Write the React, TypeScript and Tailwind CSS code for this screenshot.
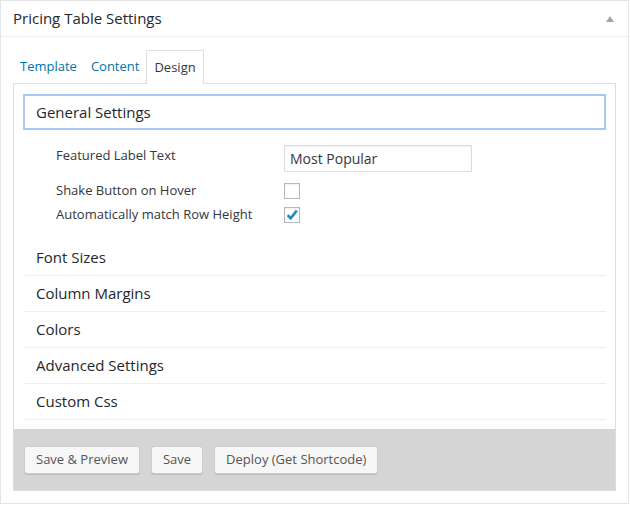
import React from "react";

const sections = ["Font Sizes", "Column Margins", "Colors", "Advanced Settings", "Custom Css"];

function CheckBox({ checked }: { checked?: boolean }) {
  return (
    <span className="flex h-[16px] w-[16px] items-center justify-center border border-[#b4b9be] bg-white shadow-[inset_0_1px_2px_rgba(0,0,0,0.07)]">
      {checked && (
        <svg width="14" height="14" viewBox="0 0 14 14">
          <path d="M2.6 7.2l3 3L11.8 2.6" fill="none" stroke="#1e8cbe" strokeWidth="2.6" strokeLinejoin="miter" />
        </svg>
      )}
    </span>
  );
}

export default function App() {
  return (
    <div className="bg-white font-['Open_Sans',sans-serif] text-[#23282d]">
      <div className="flex h-[504px] w-[629px] flex-col border border-[#e5e5e5] bg-white">
        {/* Header */}
        <div className="flex h-[36px] shrink-0 items-center justify-between border-b border-[#eeeeee] pl-[12px] pr-[14px]">
          <h2 className="text-[15px] leading-none text-[#23282d]">Pricing Table Settings</h2>
          <span className="h-0 w-0 border-x-[4px] border-b-[6px] border-x-transparent border-b-[#a0a5aa]" />
        </div>

        <div className="px-[12px] pt-[13px]">
          {/* Tabs */}
          <div className="relative z-10 flex h-[34px] items-stretch text-[13px]">
            <span className="flex items-center px-[7px] text-[#0073aa]">Template</span>
            <span className="flex items-center px-[7px] text-[#0073aa]">Content</span>
            <span className="flex items-center rounded-t-[2px] border border-b-0 border-[#dddddd] bg-white px-[7px] text-[#32373c]">
              Design
            </span>
          </div>

          {/* Panel */}
          <div className="-mt-px flex h-[408px] flex-col border border-[#dddddd] bg-white">
            <div className="flex-1 px-[9px] pt-[10px]">
              <div className="flex h-[36px] items-center border-2 border-[#a7c8f5] px-[11px] text-[15px] text-[#23282d]">
                General Settings
              </div>

              <div className="pl-[33px] pt-[15px] text-[13px] text-[#32373c]">
                <div className="flex h-[27px] items-start">
                  <span className="w-[228px] pt-[1px]">Featured Label Text</span>
                  <div className="flex h-[27px] w-[188px] items-center border border-[#dddddd] px-[5px] text-[14px] text-[#32373c] shadow-[inset_0_1px_2px_rgba(0,0,0,0.07)]">
                    Most Popular
                  </div>
                </div>
                <div className="mt-[10px] flex h-[18px] items-center">
                  <span className="w-[228px]">Shake Button on Hover</span>
                  <CheckBox />
                </div>
                <div className="mt-[6px] flex h-[18px] items-center">
                  <span className="w-[228px]">Automatically match Row Height</span>
                  <CheckBox checked />
                </div>
              </div>

              <div className="mt-[16px]">
                {sections.map((s) => (
                  <div
                    key={s}
                    className="flex h-[36px] items-center border-b border-[#eeeeee] pl-[13px] text-[15px] text-[#23282d]"
                  >
                    {s}
                  </div>
                ))}
              </div>
            </div>

            {/* Footer */}
            <div className="flex h-[61px] shrink-0 items-start gap-[11px] bg-[#d5d5d5] pl-[10px] pt-[17px]">
              {["Save & Preview", "Save", "Deploy (Get Shortcode)"].map((b) => (
                <button
                  key={b}
                  className="h-[28px] rounded-[3px] border border-[#cccccc] bg-[#f7f7f7] px-[11px] text-[13px] text-[#555555] shadow-[0_1px_0_#bbbbbb]"
                >
                  {b}
                </button>
              ))}
            </div>
          </div>
        </div>
      </div>
    </div>
  );
}
